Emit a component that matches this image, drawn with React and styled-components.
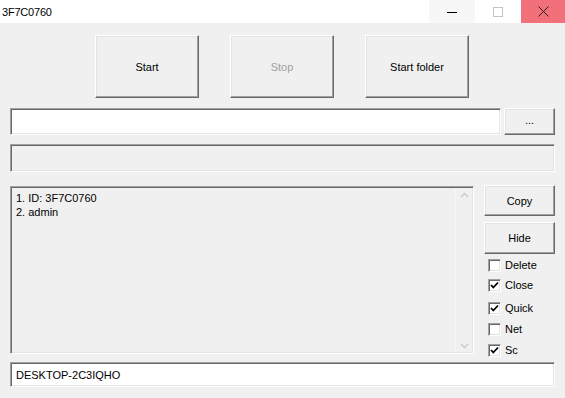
import React from "react";
import styled, { createGlobalStyle } from "styled-components";

const Global = createGlobalStyle`
  html, body { margin: 0; padding: 0; background: #f0f0f0; }
  body { font-family: "Liberation Sans", Arial, sans-serif; }
  * { box-sizing: border-box; }
`;

const Window = styled.div`
  width: 565px;
  height: 398px;
  background: #f0f0f0;
  display: flex;
  flex-direction: column;
  overflow: hidden;
`;

const TitleBar = styled.div`
  height: 23px;
  background: #ffffff;
  display: flex;
  align-items: stretch;
`;

const Title = styled.div`
  flex: 1;
  display: flex;
  align-items: center;
  padding-left: 2px;
  font-size: 11px;
  letter-spacing: -0.2px;
  color: #000;
`;

const CtlButton = styled.div`
  width: ${(p) => p.$w || 46}px;
  display: flex;
  align-items: center;
  justify-content: center;
  background: ${(p) => p.$bg || "#ffffff"};
`;

const Content = styled.div`
  flex: 1;
  display: flex;
  flex-direction: column;
  padding: 0 10px;
`;

const ButtonRow = styled.div`
  margin-top: 12px;
  display: flex;
  justify-content: center;
  gap: 31px;
  padding-right: 1px;
`;

const Button = styled.div`
  width: ${(p) => p.$w}px;
  height: ${(p) => p.$h}px;
  flex: none;
  display: flex;
  align-items: center;
  justify-content: center;
  background: #f0f0f0;
  border: 1px solid;
  border-color: #ffffff #696969 #696969 #ffffff;
  box-shadow: inset -1px -1px 0 #a0a0a0, inset 1px 1px 0 #e3e3e3;
  font-size: 11px;
  color: ${(p) => (p.$disabled ? "#a0a0a0" : "#000")};
  margin-top: ${(p) => p.$mt || 0}px;
  padding-bottom: ${(p) => p.$pb || 0}px;
`;

const PathRow = styled.div`
  margin-top: 10px;
  display: flex;
  gap: 3px;
`;

const Sunken = styled.div`
  border: 1px solid;
  border-color: #a0a0a0 #ffffff #ffffff #a0a0a0;
  box-shadow: inset 1px 1px 0 #696969, inset -1px -1px 0 #e3e3e3;
  background: ${(p) => (p.$white ? "#ffffff" : "#f0f0f0")};
`;

const PathField = styled(Sunken)`
  flex: 1;
  height: 27px;
`;

const ProgressField = styled(Sunken)`
  margin-top: 9px;
  height: 28px;
`;

const MainRow = styled.div`
  margin-top: 14px;
  height: 168px;
  display: flex;
  align-items: flex-start;
  gap: 10px;
`;

const ListBox = styled(Sunken)`
  flex: 1;
  height: 168px;
  display: flex;
`;

const ListText = styled.div`
  flex: 1;
  padding: 4px 0 0 5px;
  font-size: 11px;
  line-height: 14px;
  color: #000;
`;

const ScrollBar = styled.div`
  width: 17px;
  margin: 2px 1px 1px 0;
  display: flex;
  flex-direction: column;
  justify-content: space-between;
  align-items: center;
  background: #f0f0f0;
  border-left: 1px solid #f7f7f7;
  padding: 3px 0;
`;

const Side = styled.div`
  width: 71px;
  display: flex;
  flex-direction: column;
`;

const CheckRow = styled.div`
  margin-top: ${(p) => p.$mt}px;
  height: 16px;
  flex: none;
  display: flex;
  align-items: center;
  gap: 4px;
  padding-left: 4px;
  font-size: 11px;
  color: #000;
`;

const Box = styled.div`
  width: 13px;
  height: 13px;
  background: #ffffff;
  border: 1px solid;
  border-color: #a0a0a0 #ffffff #ffffff #a0a0a0;
  box-shadow: inset 1px 1px 0 #696969, inset -1px -1px 0 #e3e3e3;
  display: flex;
  align-items: center;
  justify-content: center;
`;

const HostField = styled(Sunken)`
  margin-top: 8px;
  height: 25px;
  display: flex;
  align-items: center;
  padding-left: 5px;
  font-size: 11px;
  color: #000;
`;

const Check = ({ label, checked, mt }) => (
  <CheckRow $mt={mt}>
    <Box>
      {checked && (
        <svg width="9" height="9" viewBox="0 0 9 9">
          <path d="M1 4 L3.3 6.5 L8 1.5" fill="none" stroke="#000" strokeWidth="1.8" />
        </svg>
      )}
    </Box>
    {label}
  </CheckRow>
);

export default function App() {
  return (
    <>
      <Global />
      <Window>
        <TitleBar>
          <Title>3F7C0760</Title>
          <CtlButton $bg="#f7f7f7">
            <svg width="10" height="10" viewBox="0 0 10 10">
              <line x1="0" y1="5.5" x2="10" y2="5.5" stroke="#000" strokeWidth="1" />
            </svg>
          </CtlButton>
          <CtlButton>
            <svg width="10" height="10" viewBox="0 0 10 10">
              <rect x="0.5" y="0.5" width="9" height="9" fill="none" stroke="#c4c4c4" strokeWidth="1" />
            </svg>
          </CtlButton>
          <CtlButton $bg="#f1707a" $w={44}>
            <svg width="11" height="11" viewBox="0 0 11 11">
              <path d="M0.5 0.5 L10.5 10.5 M10.5 0.5 L0.5 10.5" stroke="#222" strokeWidth="1" />
            </svg>
          </CtlButton>
        </TitleBar>
        <Content>
          <ButtonRow>
            <Button $w={104} $h={63}>Start</Button>
            <Button $w={104} $h={63} $disabled>Stop</Button>
            <Button $w={104} $h={63}>Start folder</Button>
          </ButtonRow>
          <PathRow>
            <PathField $white />
            <Button $w={51} $h={27} $pb={4}>...</Button>
          </PathRow>
          <ProgressField />
          <MainRow>
            <ListBox>
              <ListText>
                1. ID: 3F7C0760
                <br />
                2. admin
              </ListText>
              <ScrollBar>
                <svg width="9" height="6" viewBox="0 0 9 6">
                  <path d="M1 5 L4.5 1.5 L8 5" fill="none" stroke="#c8c8c8" strokeWidth="1.3" />
                </svg>
                <svg width="9" height="6" viewBox="0 0 9 6">
                  <path d="M1 1 L4.5 4.5 L8 1" fill="none" stroke="#c8c8c8" strokeWidth="1.3" />
                </svg>
              </ScrollBar>
            </ListBox>
            <Side>
              <Button $w={71} $h={31} $mt={-1}>Copy</Button>
              <Button $w={71} $h={32} $mt={6}>Hide</Button>
              <Check label="Delete" mt={3} />
              <Check label="Close" checked mt={4} />
              <Check label="Quick" checked mt={7} />
              <Check label="Net" mt={5} />
              <Check label="Sc" checked mt={5} />
            </Side>
          </MainRow>
          <HostField $white>DESKTOP-2C3IQHO</HostField>
        </Content>
      </Window>
    </>
  );
}
